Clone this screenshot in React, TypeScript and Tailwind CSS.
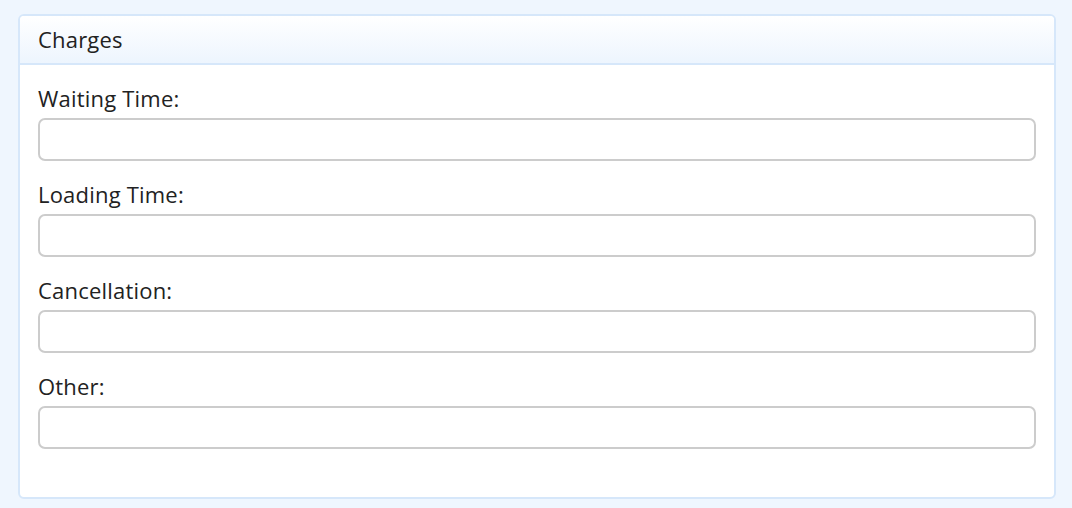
import React from 'react';

const fields = ['Waiting Time:', 'Loading Time:', 'Cancellation:', 'Other:'];

export default function App() {
    return (
        <div
            className="min-h-[508px] w-full bg-[#eff6fe] pt-[14px] pl-[18px] pr-[16px] pb-[11px] text-[#222]"
            style={{ fontFamily: '"Open Sans", Arial, sans-serif' }}
        >
            <div className="rounded-[6px] border-2 border-[#d6e7fa] bg-white overflow-hidden">
                <div className="h-[49px] flex items-center px-[18px] border-b-2 border-[#d6e7fa] bg-gradient-to-b from-white to-[#edf5fe]">
                    <span className="text-[22px] leading-[28px] tracking-[0.2px] -mt-[2px]">Charges</span>
                </div>
                <div className="px-[18px] pt-[21px] pb-[27px]">
                    {fields.map((label) => (
                        <div key={label} className="mb-[21px]">
                            <label className="block text-[22px] leading-[24px] tracking-[0.2px] mb-[8px]">{label}</label>
                            <input
                                type="text"
                                className="block w-full h-[43px] rounded-[7px] border-2 border-[#cccccc] bg-white outline-none"
                            />
                        </div>
                    ))}
                </div>
            </div>
        </div>
    );
}
